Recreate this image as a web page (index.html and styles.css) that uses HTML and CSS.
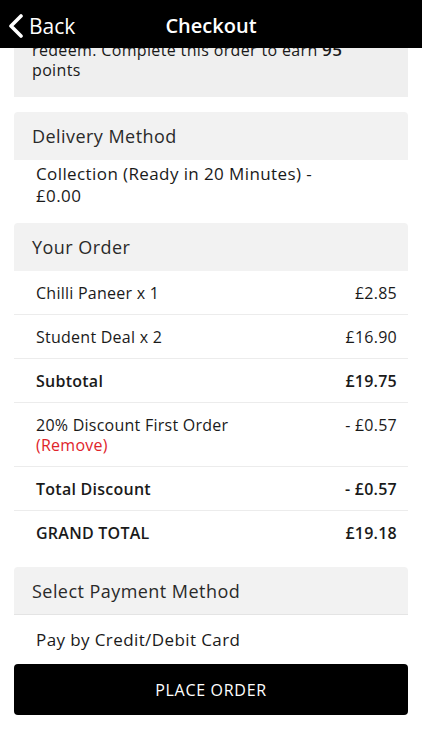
FILE: index.html
```html
<!DOCTYPE html>
<html lang="en">
<head>
<meta charset="utf-8">
<title>Checkout</title>
<link rel="stylesheet" href="styles.css">
</head>
<body>
<header class="topbar">
  <a class="back" href="#">
    <svg class="chev" width="16" height="24" viewBox="0 0 16 24"><path d="M13 2 L3 12 L13 22" fill="none" stroke="#fff" stroke-width="3.6" stroke-linecap="round" stroke-linejoin="round"/></svg>
    <span>Back</span>
  </a>
  <h1 class="title">Checkout</h1>
</header>

<div class="scroll">
<main class="content">
  <div class="points-box">
    <p>redeem. Complete this order to earn <b>95</b><br>points</p>
  </div>

  <section class="section">
    <div class="section-head">Delivery Method</div>
    <div class="section-body delivery">Collection (Ready in 20 Minutes) -<br>£0.00</div>
  </section>

  <section class="section">
    <div class="section-head">Your Order</div>
    <div class="rows">
      <div class="row"><span>Chilli Paneer x 1</span><span>£2.85</span></div>
      <div class="row"><span>Student Deal x 2</span><span>£16.90</span></div>
      <div class="row bold"><span>Subtotal</span><span>£19.75</span></div>
      <div class="row tall"><span>20% Discount First Order<br><a class="remove" href="#">(Remove)</a></span><span>- £0.57</span></div>
      <div class="row bold"><span>Total Discount</span><span>- £0.57</span></div>
      <div class="row bold last"><span>GRAND TOTAL</span><span>£19.18</span></div>
    </div>
  </section>

  <section class="section">
    <div class="section-head lined">Select Payment Method</div>
    <div class="section-body pay">Pay by Credit/Debit Card</div>
  </section>

  <button class="place">PLACE ORDER</button>
</main>
</div>
</body>
</html>
```

FILE: styles.css
```css
* { box-sizing: border-box; }
html, body { margin: 0; padding: 0; background: #fff; }
body {
  font-family: "Open Sans", "Noto Sans", "DejaVu Sans", sans-serif;
  color: #1a1a1a;
  width: 422px;
  height: 750px;
  overflow: hidden;
  display: flex;
  flex-direction: column;
}
.topbar {
  flex: 0 0 48px;
  height: 48px;
  background: #000;
  position: relative;
  display: flex;
  align-items: center;
}
.back {
  position: absolute;
  left: 8px;
  top: 12px;
  display: flex;
  align-items: center;
  gap: 5px;
  color: #fff;
  text-decoration: none;
  font-size: 21px;
}
.chev { display: block; }
.title {
  margin: 0 auto;
  color: #fff;
  font-size: 20px;
  font-weight: 600;
  padding-top: 2px;
}
.scroll {
  flex: 1 1 auto;
  overflow: hidden;
}
.content {
  padding: 0 14px;
}
.points-box {
  background: #efefef;
  margin-top: -12px;
  padding: 4px 18px 17px;
}
.points-box p {
  margin: 0;
  font-size: 16px;
  letter-spacing: 0.35px;
  line-height: 20px;
}
.points-box b { font-size: 17px; font-weight: 600; }
.section { margin-top: 15px; }
.section + .section { margin-top: 0; }
.section-head {
  background: #f2f2f2;
  border-radius: 4px 4px 0 0;
  height: 48px;
  padding: 0 18px;
  display: flex;
  align-items: center;
  font-size: 18px;
  letter-spacing: 0.45px;
  color: #2a2a2a;
}
.section-head.lined { border-bottom: 1px solid #e4e4e4; }
.section-body {
  padding: 3px 22px 0;
  font-size: 17px;
  letter-spacing: 0.4px;
  line-height: 22px;
}
.delivery { padding-bottom: 16px; }
.rows { padding-bottom: 13px; }
.row {
  display: flex;
  justify-content: space-between;
  align-items: flex-start;
  padding: 12px 11px 11px 22px;
  line-height: 20px;
  font-size: 16px;
  letter-spacing: 0.25px;
  border-bottom: 1px solid #ececec;
}
.row.last { border-bottom: none; }
.row.bold { font-weight: 600; }
.remove { color: #e0242a; text-decoration: none; }
.pay { padding-top: 14px; padding-bottom: 13px; }
.place {
  display: block;
  width: 100%;
  height: 51px;
  border: none;
  border-radius: 4px;
  background: #000;
  color: #fff;
  font-family: inherit;
  font-size: 16px;
  letter-spacing: 0.7px;
}
```
